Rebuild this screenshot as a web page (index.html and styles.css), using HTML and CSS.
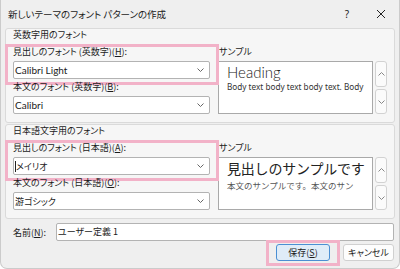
FILE: index.html
```html
<!DOCTYPE html>
<html lang="ja">
<head>
<meta charset="utf-8">
<link rel="stylesheet" href="styles.css">
</head>
<body>
<div class="dialog">
  <div class="titlebar">
    <span class="title">新しいテーマのフォント パターンの作成</span>
    <span class="tb-help">?</span>
    <span class="tb-close"><svg width="10" height="10" viewBox="0 0 10 10"><path d="M1 1L9 9M9 1L1 9" stroke="#222" stroke-width="1" fill="none"/></svg></span>
  </div>

  <section class="group">
    <div class="legend">英数字用のフォント</div>
    <div class="group-body">
      <div class="fields">
        <div class="field hl">
          <div class="lbl">見出しのフォント (英数字)(<u>H</u>):</div>
          <div class="combo"><span class="val latin">Calibri Light</span><svg class="chev" width="7" height="4" viewBox="0 0 7 4"><path d="M0.5 0.5L3.5 3.5L6.5 0.5" stroke="#666" fill="none"/></svg></div>
        </div>
        <div class="field">
          <div class="lbl">本文のフォント (英数字)(<u>B</u>):</div>
          <div class="combo"><span class="val latin">Calibri</span><svg class="chev" width="7" height="4" viewBox="0 0 7 4"><path d="M0.5 0.5L3.5 3.5L6.5 0.5" stroke="#666" fill="none"/></svg></div>
        </div>
      </div>
      <div class="sample">
        <div class="lbl">サンプル</div>
        <div class="sample-row">
          <div class="sample-box">
            <div class="s-head latin-light">Heading</div>
            <div class="s-body">Body text body text body text. Body</div>
          </div>
          <div class="spin">
            <div class="spin-btn"><svg width="7" height="4" viewBox="0 0 7 4"><path d="M0.5 3.5L3.5 0.5L6.5 3.5" stroke="#888" fill="none"/></svg></div>
            <div class="spin-btn"><svg width="7" height="4" viewBox="0 0 7 4"><path d="M0.5 0.5L3.5 3.5L6.5 0.5" stroke="#888" fill="none"/></svg></div>
          </div>
        </div>
      </div>
    </div>
  </section>

  <section class="group">
    <div class="legend">日本語文字用のフォント</div>
    <div class="group-body">
      <div class="fields">
        <div class="field hl">
          <div class="lbl">見出しのフォント (日本語)(<u>A</u>):</div>
          <div class="combo"><span class="caret"></span><span class="val">メイリオ</span><svg class="chev" width="7" height="4" viewBox="0 0 7 4"><path d="M0.5 0.5L3.5 3.5L6.5 0.5" stroke="#666" fill="none"/></svg></div>
        </div>
        <div class="field">
          <div class="lbl">本文のフォント (日本語)(<u>O</u>):</div>
          <div class="combo"><span class="val">游ゴシック</span><svg class="chev" width="7" height="4" viewBox="0 0 7 4"><path d="M0.5 0.5L3.5 3.5L6.5 0.5" stroke="#666" fill="none"/></svg></div>
        </div>
      </div>
      <div class="sample">
        <div class="lbl">サンプル</div>
        <div class="sample-row">
          <div class="sample-box">
            <div class="s-head jp">見出しのサンプルです</div>
            <div class="s-body jp-body">本文のサンプルです。本文のサン</div>
          </div>
          <div class="spin">
            <div class="spin-btn"><svg width="7" height="4" viewBox="0 0 7 4"><path d="M0.5 3.5L3.5 0.5L6.5 3.5" stroke="#888" fill="none"/></svg></div>
            <div class="spin-btn"><svg width="7" height="4" viewBox="0 0 7 4"><path d="M0.5 0.5L3.5 3.5L6.5 0.5" stroke="#888" fill="none"/></svg></div>
          </div>
        </div>
      </div>
    </div>
  </section>

  <div class="name-row">
    <div class="name-lbl">名前(<u>N</u>):</div>
    <div class="name-input">ユーザー定義 1</div>
  </div>

  <div class="buttons">
    <div class="btn primary hlb">保存(<u>S</u>)</div>
    <div class="btn">キャンセル</div>
  </div>
</div>
</body>
</html>
```
FILE: styles.css
```css
* { box-sizing: border-box; }

body {
  margin: 0;
  background: #ffffff;
  font-family: "Noto Sans CJK JP", "Noto Sans", sans-serif;
  font-size: 9px;
  color: #1b1b1b;
  font-feature-settings: "palt";
}

u { text-decoration: underline; text-underline-offset: 1px; }

.dialog {
  width: 400px;
  height: 269px;
  background: #efefef;
  border: 1px solid #cbcbcb;
  border-top: none;
  border-radius: 0 0 7px 7px;
  padding: 0 4px;
  display: flex;
  flex-direction: column;
  overflow: hidden;
}

.titlebar {
  height: 28px;
  margin: 0 -4px;
  padding-left: 7px;
  display: flex;
  align-items: center;
}

.title { flex: 1; font-size: 9.5px; line-height: 12px; }

.tb-help {
  width: 20px;
  text-align: center;
  font-size: 10px;
  font-family: "Noto Sans", sans-serif;
}

.tb-close {
  width: 28px;
  margin-left: 10px;
  margin-right: 4px;
  display: flex;
  justify-content: center;
  align-items: center;
}

.group {
  height: 95px;
  border: 1px solid #dadada;
  border-radius: 3px;
  background: #f6f6f6;
}

.group + .group { margin-top: 1px; }

.legend {
  height: 12px;
  line-height: 12px;
  padding-left: 7px;
}

.group-body {
  margin-top: 3px;
  display: flex;
  gap: 5px;
}

.fields { width: 207px; }

.field {
  position: relative;
  padding: 2px 0 0 7px;
}

.hl::after {
  content: "";
  position: absolute;
  left: -1px;
  top: 0;
  width: 208px;
  height: 35px;
  border: 3px solid #f2b2c8;
}

.lbl {
  height: 12px;
  line-height: 12px;
}

.combo {
  margin-top: 3px;
  width: 197px;
  height: 18px;
  background: #ffffff;
  border: 1px solid #b3b3b3;
  border-radius: 2px;
  display: flex;
  align-items: center;
  padding-left: 1px;
}

.val { flex: 1; white-space: nowrap; }

.latin { font-family: "Lato", "Noto Sans", sans-serif; font-size: 10px; }

.caret {
  width: 1px;
  height: 11px;
  background: #222;
}

.chev { margin-right: 5px; }

.sample {
  width: 176px;
  padding-top: 2px;
}

.sample .lbl { padding-left: 1px; }

.sample-row {
  margin-top: 3px;
  display: flex;
  gap: 2px;
}

.sample-box {
  width: 155px;
  height: 53px;
  background: #ffffff;
  border: 1px solid #a9a9a9;
  padding: 1px 0 0 8px;
  overflow: hidden;
  white-space: nowrap;
}

.s-head {
  font-size: 15px;
  line-height: 19px;
  color: #222;
}

.latin-light { font-family: "Lato", "Noto Sans", sans-serif; font-weight: 300; }

.jp { font-size: 14px; line-height: 18px; font-feature-settings: normal; letter-spacing: -0.2px; }

.s-body {
  font-family: "Noto Sans", sans-serif;
  font-size: 8.2px;
  line-height: 10px;
  color: #333;
}

.jp-body {
  font-family: "Noto Sans CJK JP", sans-serif;
  font-feature-settings: normal;
  font-size: 8.5px;
  margin-top: 3px;
  color: #555;
}

.spin {
  width: 12px;
  display: flex;
  flex-direction: column;
  gap: 2px;
}

.spin-btn {
  height: 26px;
  background: #fbfbfb;
  border: 1px solid #d2d2d2;
  border-radius: 3px;
  display: flex;
  align-items: center;
  justify-content: center;
}

.spin-btn + .spin-btn { height: 25px; }

.name-row {
  margin-top: 4px;
  padding-left: 8px;
  display: flex;
  align-items: center;
}

.name-lbl { width: 43px; }

.name-input {
  flex: 1;
  height: 18px;
  margin-right: 1px;
  background: #ffffff;
  border: 1px solid #b3b3b3;
  border-radius: 2px;
  padding-left: 1px;
  line-height: 16px;
}

.buttons {
  margin-top: 3px;
  display: flex;
  justify-content: flex-end;
  gap: 13px;
  padding-right: 1px;
}

.btn {
  position: relative;
  width: 51px;
  height: 17px;
  line-height: 15px;
  text-align: center;
  background: #fdfdfd;
  border: 1px solid #d0d0d0;
  border-radius: 3px;
}

.primary {
  width: 54px;
  background: #dfecf8;
  border-color: #4b8fd3;
}

.hlb::after {
  content: "";
  position: absolute;
  left: -11px;
  top: -5px;
  right: -11px;
  bottom: -6px;
  border: 3px solid #f2b2c8;
}
```
